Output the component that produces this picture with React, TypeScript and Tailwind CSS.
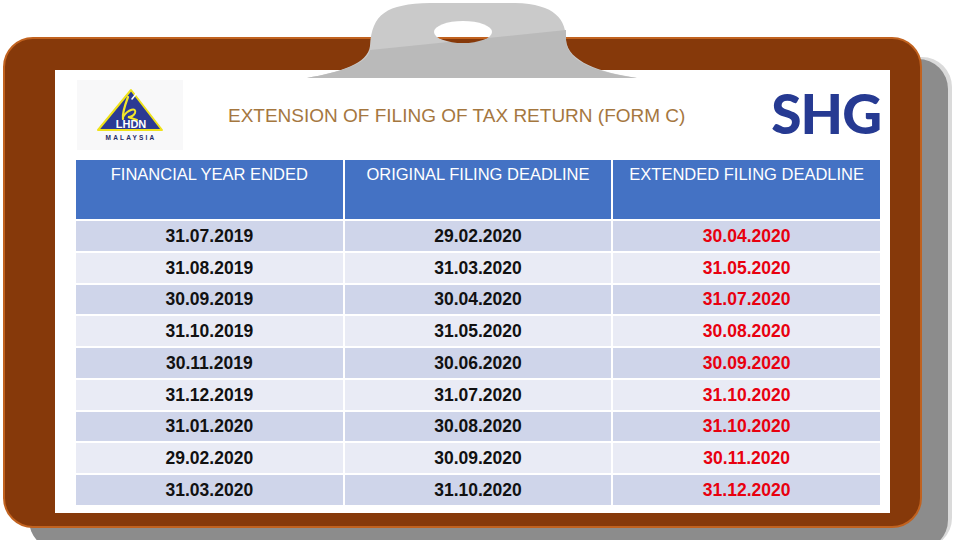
const rows = [
  ["31.07.2019", "29.02.2020", "30.04.2020"],
  ["31.08.2019", "31.03.2020", "31.05.2020"],
  ["30.09.2019", "30.04.2020", "31.07.2020"],
  ["31.10.2019", "31.05.2020", "30.08.2020"],
  ["30.11.2019", "30.06.2020", "30.09.2020"],
  ["31.12.2019", "31.07.2020", "31.10.2020"],
  ["31.01.2020", "30.08.2020", "31.10.2020"],
  ["29.02.2020", "30.09.2020", "30.11.2020"],
  ["31.03.2020", "31.10.2020", "31.12.2020"],
];

const headers = ["FINANCIAL YEAR ENDED", "ORIGINAL FILING DEADLINE", "EXTENDED FILING DEADLINE"];

function LhdnLogo() {
  return (
    <svg width="70" height="56" viewBox="0 0 70 56">
      <polygon points="36,3 3,43 67,43" fill="#2b3a93" stroke="#efe21a" strokeWidth="2" strokeLinejoin="round" />
      <path d="M33 10 C30 18 27 26 28 32" stroke="#f2e72a" strokeWidth="2.2" fill="none" strokeLinecap="round" />
      <path d="M28 30 C33 22 42 20 40 26 C38 30 33 30 33 30 L42 33" stroke="#f2e72a" strokeWidth="2" fill="none" strokeLinecap="round" />
      <path d="M37 12 L41 7" stroke="#ffffff" strokeWidth="1.6" strokeLinecap="round" />
      <text x="36" y="41" textAnchor="middle" fill="#ffffff" fontSize="11" fontWeight="700" fontFamily="Liberation Sans, Arial, sans-serif">LHDN</text>
      <text x="36" y="53" textAnchor="middle" fill="#1f2a66" fontSize="6.5" fontWeight="700" letterSpacing="2.2" fontFamily="Liberation Sans, Arial, sans-serif">MALAYSIA</text>
    </svg>
  );
}

function Clip() {
  return (
    <svg
      className="absolute left-[300px] top-0"
      width="340"
      height="80"
      viewBox="300 0 340 80"
    >
      <defs>
        <mask id="hole">
          <rect x="300" y="0" width="340" height="80" fill="#ffffff" />
          <ellipse cx="463" cy="32" rx="29" ry="11" fill="#000000" />
        </mask>
      </defs>
      <g mask="url(#hole)">
        <path
          fill="#cacaca"
          d="M307 78 C340 72 368 64 370 46 C372 14 386 4 430 3 L515 3 C556 4 566 20 566 40 C568 62 600 72 637 78 Z"
        />
        <path
          fill="#bababa"
          d="M307 78 C340 72 368 64 370 50 L566 30 C566 40 566 44 567 46 C572 64 602 73 637 78 Z"
        />
      </g>
    </svg>
  );
}

export default function App() {
  return (
    <main className="relative w-[960px] h-[540px] overflow-hidden bg-white pt-[37px] pl-[3px]">
      <div className="w-[919px] h-[491px] rounded-[30px] bg-[#86390a] border-2 border-[#c1621f] shadow-[26px_22px_0_#8c8c8c,30px_20px_0_#dadada] pt-[31px] pl-[50px]">
        <div className="w-[835px] h-[443px] bg-white">
          <div className="flex h-[90px] items-center">
            <div className="ml-[22px] flex h-[70px] w-[106px] items-center justify-center bg-[#f8f8f9]">
              <LhdnLogo />
            </div>
            <h1 className="ml-[45px] text-[19px] leading-none text-[#a5773f] font-['Liberation_Sans',Arial,sans-serif]">
              EXTENSION OF FILING OF TAX RETURN (FORM C)
            </h1>
            <div className="ml-auto mr-[9px] -mt-[4px] text-[55px] leading-none font-black tracking-[-1px] text-[#263a92] font-['Lato',sans-serif]">
              SHG
            </div>
          </div>

          <div className="ml-[21px] w-[804px] grid grid-cols-3 gap-x-[2px] gap-y-[2px] font-['Liberation_Sans',Arial,sans-serif]">
            {headers.map((h) => (
              <div key={h} className="h-[59px] bg-[#4472c4] pt-[5px] text-center text-[16.5px] leading-[19px] text-white">
                {h}
              </div>
            ))}
            {rows.map((r, i) =>
              r.map((cell, j) => (
                <div
                  key={`${i}-${j}`}
                  className={`h-[29.75px] flex items-center justify-center text-[17.5px] font-bold ${
                    i % 2 === 0 ? "bg-[#cfd5ea]" : "bg-[#e9ebf5]"
                  } ${j === 2 ? "text-[#e8000f]" : "text-[#111111]"}`}
                >
                  {cell}
                </div>
              ))
            )}
          </div>
        </div>
      </div>
      <Clip />
    </main>
  );
}
